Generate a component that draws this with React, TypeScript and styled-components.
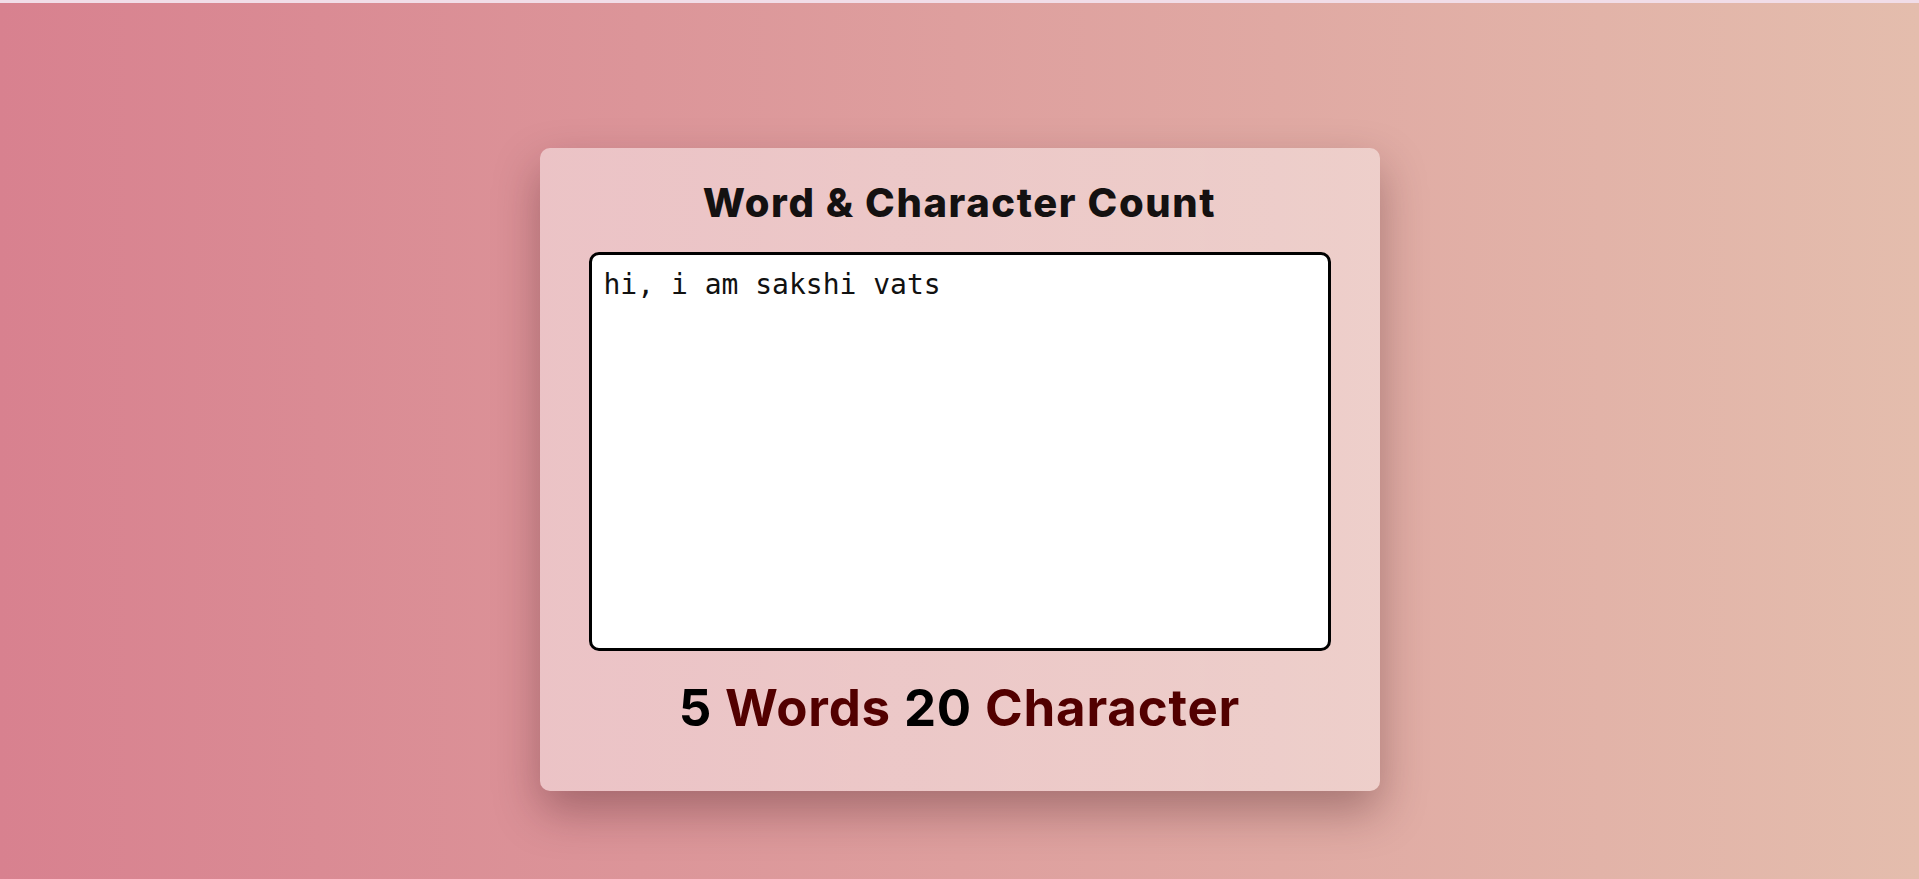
import { useState } from 'react';
import styled, { createGlobalStyle } from 'styled-components';

const GlobalStyle = createGlobalStyle`
  * {
    box-sizing: border-box;
  }
  body {
    margin: 0;
    font-family: Inter, "Open Sans", sans-serif;
  }
`;

const Page = styled.div`
  width: 100%;
  min-height: 100vh;
  display: flex;
  justify-content: center;
  align-items: flex-start;
  padding-top: 145px;
  border-top: 3px solid #f1dde8;
  background: linear-gradient(to right, #d8818f, #e4bdad);
`;

const Card = styled.div`
  width: 840px;
  height: 643px;
  display: flex;
  flex-direction: column;
  align-items: center;
  padding: 30px 49px 0;
  border-radius: 10px;
  background: linear-gradient(to right, rgba(255, 255, 255, 0.45), rgba(255, 255, 255, 0.42));
  box-shadow: 0 20px 45px rgba(60, 20, 25, 0.35);
`;

const Title = styled.h1`
  margin: 0;
  font-size: 40px;
  font-weight: 800;
  letter-spacing: 1.6px;
  color: #141111;
`;

const TextBox = styled.textarea`
  width: 100%;
  height: 399px;
  margin-top: 25px;
  padding: 13px 12px;
  border: 3px solid #000;
  border-radius: 10px;
  background: #fff;
  resize: none;
  outline: none;
  font-family: "DejaVu Sans Mono", "Liberation Mono", monospace;
  font-size: 28px;
  color: #111;
`;

const Stats = styled.p`
  margin: 26px 0 0;
  font-size: 51px;
  font-weight: 700;
  letter-spacing: 0.8px;
  color: #000;
`;

const Label = styled.span`
  color: #520000;
`;

export default function App() {
  const [text, setText] = useState('hi, i am sakshi vats');

  const words = text.trim() === '' ? 0 : text.trim().split(/\s+/).length;
  const chars = text.length;

  return (
    <>
      <GlobalStyle />
      <Page>
        <Card>
          <Title>Word &amp; Character Count</Title>
          <TextBox value={text} onChange={(e) => setText(e.target.value)} spellCheck={false} />
          <Stats>
            {words} <Label>Words</Label> {chars} <Label>Character</Label>
          </Stats>
        </Card>
      </Page>
    </>
  );
}
